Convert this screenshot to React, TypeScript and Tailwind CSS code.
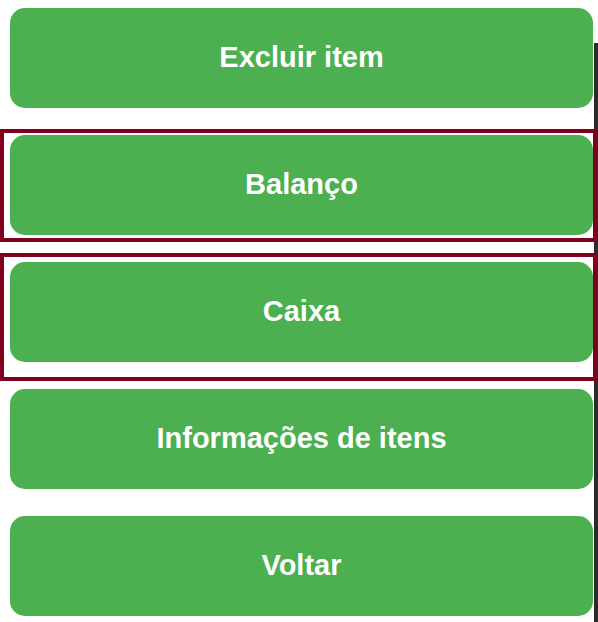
const ITEMS = [
  { label: "Excluir item", box: "" },
  { label: "Balanço", box: "-left-[10px] -right-[4px] -top-[6px] -bottom-[7px]" },
  { label: "Caixa", box: "-left-[10px] -right-[4px] -top-[9px] -bottom-[19px]" },
  { label: "Informações de itens", box: "" },
  { label: "Voltar", box: "" },
];

export default function App() {
  return (
    <main className="flex w-[598px] h-[622px] bg-white overflow-hidden font-['Liberation_Sans',Arial,sans-serif]">
      {/* ── Menu buttons ── */}
      <div className="flex flex-col w-[594px] pt-[8px] pl-[10px] pr-px gap-[27px] flex-shrink-0">
        {ITEMS.map((item) => (
          <div key={item.label} className="relative">
            <button className="w-full h-[100px] rounded-[15px] bg-[#4caf50] text-white text-[29px] font-bold flex items-center justify-center">
              {item.label}
            </button>
            {item.box && (
              <span className={`absolute ${item.box} border-4 border-[#80001f] pointer-events-none`} />
            )}
          </div>
        ))}
      </div>

      {/* ── Window edge behind ── */}
      <div className="mt-[43px] w-[4px] bg-[#2b2b2b] flex-shrink-0" />
    </main>
  );
}
